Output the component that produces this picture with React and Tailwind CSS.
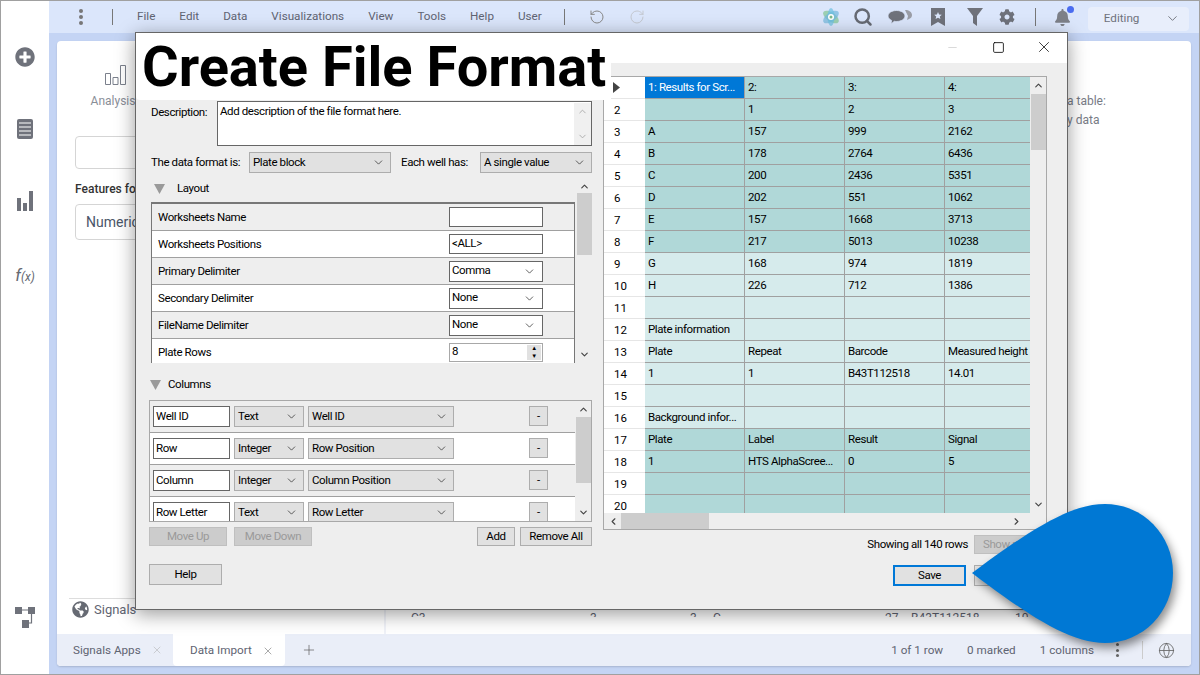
import { RotateCcw, RotateCw, Search, ChevronDown, ChevronUp, ChevronLeft, ChevronRight, X, Plus, Globe, Minus, Square } from "lucide-react";
import { FaPlusCircle, FaCog, FaBell, FaGlobeAmericas } from "react-icons/fa";

const menus = ["File", "Edit", "Data", "Visualizations", "View", "Tools", "Help", "User"];

const grid = [
  ["1: Results for Scr...", "2:", "3:", "4:"],
  ["", "1", "2", "3"],
  ["A", "157", "999", "2162"],
  ["B", "178", "2764", "6436"],
  ["C", "200", "2436", "5351"],
  ["D", "202", "551", "1062"],
  ["E", "157", "1668", "3713"],
  ["F", "217", "5013", "10238"],
  ["G", "168", "974", "1819"],
  ["H", "226", "712", "1386"],
  ["", "", "", ""],
  ["Plate information", "", "", ""],
  ["Plate", "Repeat", "Barcode", "Measured height"],
  ["1", "1", "B43T112518", "14.01"],
  ["", "", "", ""],
  ["Background infor...", "", "", ""],
  ["Plate", "Label", "Result", "Signal"],
  ["1", "HTS AlphaScree...", "0", "5"],
  ["", "", "", ""],
  ["", "", "", ""],
];

const columnRows = [
  ["Well ID", "Text", "Well ID"],
  ["Row", "Integer", "Row Position"],
  ["Column", "Integer", "Column Position"],
  ["Row Letter", "Text", "Row Letter"],
];

function DropTriangle() {
  return (
    <svg width="11" height="10" viewBox="0 0 11 10" className="shrink-0">
      <path d="M0 0h11L5.5 10z" fill="#9a9a9a" />
    </svg>
  );
}

function GraySelect({ value, className }) {
  return (
    <div className={`h-[21px] flex items-center justify-between pl-[3px] pr-[5px] bg-[#e1e1e1] border border-[#adadad] shrink-0 ${className}`}>
      <span className="pt-px">{value}</span>
      <ChevronDown size={13} strokeWidth={1.3} className="text-[#222]" />
    </div>
  );
}

function WhiteSelect({ value }) {
  return (
    <div className="w-[94px] h-[21px] flex items-center justify-between pl-[2px] pr-[6px] bg-white border border-[#666]">
      <span className="pb-[1px]">{value}</span>
      <ChevronDown size={13} strokeWidth={1.3} className="text-[#222]" />
    </div>
  );
}

function WinButton({ children, disabled, className }) {
  return (
    <div className={`flex items-center justify-center border shrink-0 pt-px ${disabled ? "bg-[#cccccc] border-[#bfbfbf] text-[#9a9a9a]" : "bg-[#e1e1e1] border-[#adadad] text-black"} ${className}`}>
      {children}
    </div>
  );
}

function LayoutRow({ label, shaded, children, cut }) {
  return (
    <div className={`flex items-center justify-between pl-[6px] pr-[31px] shrink-0 border-b border-[#a0a0a0] ${cut ? "h-[26px] border-b-0" : "h-[27px]"} ${shaded ? "bg-[#eeeeee]" : "bg-white"}`}>
      <span className="pt-px">{label}</span>
      {children}
    </div>
  );
}

function Scrollbar({ thumb, top, className }) {
  return (
    <div className={`w-[16px] flex flex-col items-center justify-between shrink-0 ${className}`}>
      <div className="w-full flex flex-col items-center">
        <ChevronUp size={11} strokeWidth={2.5} className="text-[#444] my-[3px]" />
        <div className="w-[15px] bg-[#cdcdcd]" style={{ height: thumb, marginTop: top }} />
      </div>
      <ChevronDown size={11} strokeWidth={2.5} className="text-[#444] my-[3px]" />
    </div>
  );
}

function DataGrid() {
  return (
    <div className="h-[454px] w-[444px] border border-[#a8a8a8] bg-[#eeeeee] flex flex-col">
      <div className="flex h-[436px]">
        <div className="flex-1 overflow-hidden">
          {grid.map((row, r) => {
            const dark = r < 8 || r > 15;
            return (
              <div key={r} className="flex h-[22px]">
                <div className="w-[41px] shrink-0 bg-white border-b border-[#e6e6e6] flex items-center pl-[10px] tracking-normal">
                  {r === 0 ? (
                    <svg width="7" height="11" viewBox="0 0 7 11" className="-ml-[1px]">
                      <path d="M0 0l7 5.500L0 11z" fill="#444" />
                    </svg>
                  ) : (
                    <span className="pt-[3px]">{r + 1}</span>
                  )}
                </div>
                {row.map((cell, c) => (
                  <div
                    key={c}
                    className={`h-[22px] pl-[3px] pt-px flex items-center whitespace-nowrap overflow-hidden border-b border-[#a0a0a0] ${c === 3 ? "flex-1" : "w-[100px] border-r"} ${r === 0 && c === 0 ? "bg-[#0078d7] text-white" : dark ? "bg-[#b0d8d8]" : "bg-[#d6ebec]"}`}
                  >
                    {cell}
                  </div>
                ))}
              </div>
            );
          })}
        </div>
        <Scrollbar thumb={56} top={0} />
      </div>
      <div className="flex-1 flex items-center justify-between pl-[4px] pr-[24px]">
        <div className="flex items-center">
          <ChevronLeft size={11} strokeWidth={2.5} className="text-[#444]" />
          <div className="w-[88px] h-[16px] bg-[#cdcdcd] ml-[2px]" />
        </div>
        <ChevronRight size={11} strokeWidth={2.5} className="text-[#444]" />
      </div>
    </div>
  );
}

function Dialog() {
  return (
    <div className="absolute left-[134px] top-[31px] w-[933px] h-[578px] bg-[#eeeeee] border border-[#666] shadow-[0_4px_18px_rgba(0,0,0,0.4)] [font-family:'Liberation_Sans',sans-serif] text-[11.5px] tracking-[-0.4px] text-black flex flex-col whitespace-nowrap">
      <div className="h-[30px] bg-white flex items-center justify-end shrink-0 pb-[2px]">
        <Minus size={13} strokeWidth={1} className="text-[#bbb] mr-[33px]" />
        <Square size={13} strokeWidth={1.5} className="text-black mr-[30px]" />
        <X size={18} strokeWidth={1} className="text-black mr-[14px]" />
      </div>

      {/* big caption laid over the title bar */}
      <div className="absolute left-0 top-0 w-[475px] h-[67px] bg-white rounded-bl-[4px] pl-[6px] flex items-center z-10">
        <span className="font-bold text-[56px] leading-none tracking-normal whitespace-nowrap">Create File Format</span>
      </div>

      <div className="flex-1 flex pl-[13px] pt-[13px] gap-[11px]">
        <div className="w-[443px] pt-[25px] flex flex-col">
          <div className="flex justify-between items-start h-[45px]">
            <span className="pl-[2px] pt-[3px]">Description:</span>
            <div className="w-[375px] h-[45px] bg-white border border-[#666] flex justify-between pl-[2px] pt-[1px]">
              <span>Add description of the file format here.</span>
              <div className="w-[17px] bg-[#f0f0f0] flex flex-col items-center justify-between text-[#aaa] py-[3px]">
                <ChevronUp size={11} />
                <ChevronDown size={11} />
              </div>
            </div>
          </div>

          <div className="flex items-center mt-[6px] pl-[2px]">
            <span className="w-[98px]">The data format is:</span>
            <GraySelect value="Plate block" className="w-[142px]" />
            <span className="w-[79px] ml-[10px]">Each well has:</span>
            <GraySelect value="A single value" className="w-[112px]" />
          </div>

          <div className="flex h-[185px] mt-[5px] pl-[2px]">
            <div className="flex-1 flex flex-col">
              <div className="flex items-center h-[24px] pl-[3px] gap-[12px] pb-[3px]">
                <DropTriangle />
                <span>Layout</span>
              </div>
              <div className="flex-1 border-x border-t-2 border-[#777] overflow-hidden flex flex-col">
                <LayoutRow label="Worksheets Name" shaded>
                  <div className="w-[94px] h-[20px] bg-white border border-[#666]" />
                </LayoutRow>
                <LayoutRow label="Worksheets Positions">
                  <div className="w-[94px] h-[20px] bg-white border border-[#666] pl-[2px] flex items-center">&lt;ALL&gt;</div>
                </LayoutRow>
                <LayoutRow label="Primary Delimiter" shaded>
                  <WhiteSelect value="Comma" />
                </LayoutRow>
                <LayoutRow label="Secondary Delimiter">
                  <WhiteSelect value="None" />
                </LayoutRow>
                <LayoutRow label="FileName Delimiter" shaded>
                  <WhiteSelect value="None" />
                </LayoutRow>
                <LayoutRow label="Plate Rows" cut>
                  <div className="w-[94px] h-[19px] bg-white border border-[#a8a8a8] pl-[2px] pr-[1px] flex items-center justify-between">
                    <span>8</span>
                    <div className="w-[14px] h-[15px] bg-[#e1e1e1] flex flex-col items-center justify-around text-[6px] leading-none">
                      <span>▲</span>
                      <span>▼</span>
                    </div>
                  </div>
                </LayoutRow>
              </div>
            </div>
            <Scrollbar thumb={62} top={-2} className="ml-px" />
          </div>

          <div className="flex items-center gap-[7px] h-[21px] mt-[11px] pl-[1px]">
            <DropTriangle />
            <span className="pt-px">Columns</span>
          </div>

          <div className="h-[122px] mt-[5px] border border-[#a8a8a8] flex">
            <div className="flex-1 overflow-hidden">
              {columnRows.map((row, i) => (
                <div key={row[0]} className={`h-[32px] shrink-0 flex items-start pt-[5px] pl-[3px] border-b border-[#a0a0a0] ${i % 2 === 0 ? "bg-[#eeeeee]" : "bg-white"}`}>
                  <div className="w-[77px] h-[21px] bg-white border border-[#666] pl-[2px] flex items-center shrink-0">{row[0]}</div>
                  <GraySelect value={row[1]} className="w-[70px] ml-[4px]" />
                  <GraySelect value={row[2]} className="w-[146px] ml-[4px]" />
                  <WinButton className="w-[19px] h-[20px] ml-[75px]">-</WinButton>
                </div>
              ))}
            </div>
            <Scrollbar thumb={66} top={-1} />
          </div>

          <div className="flex items-center h-[19px] mt-[5px]">
            <WinButton disabled className="w-[78px] h-[19px]">Move Up</WinButton>
            <WinButton disabled className="w-[78px] h-[19px] ml-[7px]">Move Down</WinButton>
            <WinButton className="w-[38px] h-[19px] ml-auto">Add</WinButton>
            <WinButton className="w-[72px] h-[19px] ml-[5px]">Remove All</WinButton>
          </div>

          <WinButton className="w-[73px] h-[21px] mt-[18px]">Help</WinButton>
        </div>

        <div className="w-[444px] flex flex-col">
          <DataGrid />
          <div className="flex items-center justify-end h-[19px] mt-[5px] gap-[6px]">
            <span>Showing all 140 rows</span>
            <WinButton disabled className="w-[76px] h-[19px] -mr-[3px] justify-start pl-[8px]">Show more</WinButton>
          </div>
          <div className="flex items-center justify-end mt-[11px] gap-[8px]">
            <div className="w-[73px] h-[21px] bg-[#e1e1e1] border-2 border-[#0078d7] flex items-center justify-center">Save</div>
            <WinButton className="w-[73px] h-[21px]">Cancel</WinButton>
          </div>
        </div>
      </div>
    </div>
  );
}

function Toolbar() {
  return (
    <div className="h-[32px] shrink-0 bg-[#dbe6fb] flex items-center text-[11.7px] text-[#5f6472]">
      <div className="w-[4px] h-[16px] ml-[30px] flex flex-col justify-between items-center">
        <span className="w-[4px] h-[4px] rounded-full bg-[#777]" />
        <span className="w-[4px] h-[4px] rounded-full bg-[#777]" />
        <span className="w-[4px] h-[4px] rounded-full bg-[#777]" />
      </div>
      <div className="w-px h-[16px] bg-[#777] ml-[29px]" />
      <div className="flex gap-[24px] ml-[24px]">
        {menus.map((m) => <span key={m}>{m}</span>)}
      </div>
      <div className="w-px h-[16px] bg-[#777] ml-[22px]" />
      <RotateCcw size={16} strokeWidth={1.5} className="text-[#888] ml-[24px]" />
      <RotateCw size={16} strokeWidth={1.5} className="text-[#c4c8d0] ml-[24px]" />

      <svg width="18" height="20" viewBox="0 0 18 20" className="ml-[177px]">
        <ellipse cx="9" cy="10" rx="9" ry="4.5" fill="#8cc9a0" transform="rotate(35 9 10)" opacity="0.8" />
        <ellipse cx="9" cy="10" rx="9" ry="4.5" fill="#74b6dc" transform="rotate(-35 9 10)" opacity="0.7" />
        <ellipse cx="9" cy="10" rx="3.5" ry="9" fill="#6cbfe0" opacity="0.7" />
        <circle cx="9" cy="10" r="3" fill="#fff" />
        <circle cx="9" cy="10" r="1.5" fill="#7db88a" />
      </svg>
      <Search size={20} strokeWidth={3} className="text-[#666a73] ml-[13px]" />
      <svg width="24" height="16" viewBox="0 0 24 16" className="ml-[15px]">
        <path d="M17 1c4 0 7 2 7 5 0 2-1 3-3 4l-2 1 1-4-3-6z" fill="#9a9da6" />
        <path d="M8.500 1.500c4.700 0 8.500 2.400 8.500 5.500s-3.800 5.500-8.500 5.500c-.8 0-1.500 0-2.200-.2L3 15l.6-3.600C1.400 10.400 0 8.800 0 7c0-3.100 3.800-5.500 8.500-5.500z" fill="#6f727b" stroke="#dbe6fb" strokeWidth="0.8" />
      </svg>
      <svg width="14" height="18" viewBox="0 0 14 18" className="ml-[19px]">
        <path d="M0 0h14v18l-7-4-7 4z" fill="#6f727b" />
        <path d="M7 4l1.100 2.500 2.700.2-2 1.800.6 2.600L7 9.700l-2.400 1.400.6-2.600-2-1.800 2.700-.2z" fill="#dbe6fb" />
      </svg>
      <svg width="16" height="18" viewBox="0 0 16 18" className="ml-[22px]">
        <path d="M0 0h16L10 8v10l-4-3V8z" fill="#6f727b" />
      </svg>
      <FaCog size={16} className="text-[#6f727b] ml-[16px]" />
      <div className="w-px h-[18px] bg-[#777] ml-[20px]" />
      <div className="relative ml-[18px]">
        <FaBell size={17} className="text-[#7d8088]" />
        <span className="absolute -top-[3px] -right-[3px] w-[7px] h-[7px] rounded-full bg-[#4a6cf0]" />
      </div>
      <div className="w-[101px] h-[24px] ml-[17px] mt-[3px] rounded bg-[#e8eefb] flex items-center justify-between pl-[16px] pr-[9px] text-[#6f727b]">
        <span>Editing</span>
        <ChevronDown size={15} strokeWidth={1.5} />
      </div>
    </div>
  );
}

function Sidebar() {
  return (
    <div className="w-[48px] shrink-0 bg-white flex flex-col items-center pt-[46px]">
      <FaPlusCircle size={20} className="text-[#6f727b]" />
      <svg width="16" height="20" viewBox="0 0 16 20" className="mt-[52px]">
        <rect width="16" height="20" rx="2" fill="#6f727b" />
        <path d="M2 4h12M2 8h12M2 12h12M2 16h12" stroke="#fff" strokeWidth="1.200" />
      </svg>
      <svg width="16" height="20" viewBox="0 0 16 20" className="mt-[52px]">
        <path d="M0 7h4v13H0zM6 12h4v8H6zM12 0h4v20h-4z" fill="#6f727b" />
      </svg>
      <div className="mt-[52px] [font-family:'Liberation_Serif',serif] italic text-[#666a73] flex items-baseline">
        <span className="text-[17px]">f</span>
        <span className="text-[12px]">(x)</span>
      </div>
      <svg width="20" height="21" viewBox="0 0 20 21" className="mt-auto mb-[46px]">
        <path d="M0 0h7v7H0zM13 0h7v7h-7zM7 13h7v8H7z" fill="#6f727b" />
        <path d="M7 3h6M16.500 7v9H14" stroke="#6f727b" strokeWidth="1.200" fill="none" />
      </svg>
    </div>
  );
}

function Card() {
  return (
    <div className="flex-1 mx-[8px] mt-[8px] mb-[8px] rounded bg-white flex flex-col overflow-hidden shadow-[0_1px_2px_rgba(0,0,0,0.15)]">
      <div className="flex-1 flex min-h-0">
        <div className="w-[329px] shrink-0 border-r-2 border-[#f0f2f8] flex flex-col pl-[18px] text-[#5f6472]">
          <div className="w-[76px] flex flex-col items-center pt-[24px] text-[12px] text-[#8a8e98]">
            <svg width="21" height="20" viewBox="0 0 21 20" className="ml-[4px]">
              <path d="M.5 8.500h5v11h-5zM8 12.500h5v7H8zM15.500.500h5v19h-5z" fill="none" stroke="#7b808c" />
            </svg>
            <span className="mt-[7px]">Analysis</span>
          </div>
          <div className="h-[33px] w-[290px] mt-[26px] rounded border border-[#d5d5d5]" />
          <span className="mt-[11px] text-[12px] text-[#333] font-medium">Features for</span>
          <div className="h-[36px] w-[290px] mt-[6px] rounded border border-[#d5d5d5] flex items-center pl-[10px] text-[14px] text-[#4a5568]">Numeric</div>
          <div className="mt-auto mb-[14px] -ml-[6px] border-t border-[#ddd] h-[22px] flex items-center pl-[3px] gap-[5px] text-[13px]">
            <FaGlobeAmericas size={17} className="text-[#666a73]" />
            <span>Signals</span>
          </div>
        </div>
        <div className="flex-1 flex flex-col text-[12px] text-[#777b85]">
          <div className="pl-[681px] pt-[51px] leading-[19px] whitespace-nowrap">
            <div>a table:</div>
            <div>y data</div>
          </div>
          <div className="mt-auto mb-[17px] h-[6px] overflow-hidden flex leading-[14px] text-[#5f6472] whitespace-nowrap">
            <span className="ml-[25px] w-[179px]">C3</span>
            <span className="w-[100px]">3</span>
            <span className="w-[23px]">3</span>
            <span className="w-[172px]">C</span>
            <span className="w-[26px]">27</span>
            <span className="w-[104px]">B43T112518</span>
            <span>10</span>
          </div>
        </div>
      </div>
      <div className="h-[32px] shrink-0 bg-[#eaeef8] flex items-center text-[11.7px] text-[#5f6472]">
        <div className="flex items-center w-[116px] pl-[16px] pt-px">
          <span>Signals Apps</span>
          <X size={12} strokeWidth={1} className="ml-[10px] text-[#aaa]" />
        </div>
        <div className="flex items-center w-[112px] h-full bg-white rounded-b pl-[17px] pt-px">
          <span>Data Import</span>
          <X size={12} strokeWidth={1} className="ml-[10px] text-[#555]" />
        </div>
        <Plus size={16} strokeWidth={1} className="ml-[16px] text-[#555]" />
        <span className="ml-auto pt-px">1 of 1 row</span>
        <span className="ml-[24px] pt-px">0 marked</span>
        <span className="ml-[24px] pt-px">1 columns</span>
        <div className="ml-[22px] w-[3px] h-[14px] flex flex-col justify-between">
          <span className="w-[3px] h-[3px] rounded-full bg-[#666]" />
          <span className="w-[3px] h-[3px] rounded-full bg-[#666]" />
          <span className="w-[3px] h-[3px] rounded-full bg-[#666]" />
        </div>
        <div className="w-px h-[18px] bg-[#ccc] ml-[23px]" />
        <Globe size={17} strokeWidth={1.2} className="ml-[15px] mr-[16px] text-[#666]" />
      </div>
    </div>
  );
}

export default function App() {
  return (
    <div className="relative w-[1200px] h-[675px] overflow-hidden border border-[#a0a0a0] flex bg-white [font-family:Roboto,sans-serif]">
      <Sidebar />
      <div className="flex-1 flex flex-col bg-[#c4d4f4] min-w-0">
        <Toolbar />
        <Card />
      </div>
      <Dialog />
      {/* callout drop over the dialog corner */}
      <svg width="1200" height="675" className="absolute -left-px -top-px pointer-events-none drop-shadow-[3px_5px_5px_rgba(0,0,0,0.45)]">
        <path d="M972 573C1030 530 1070 504 1105 504C1143 504 1173 535 1173 573C1173 612 1143 643 1105 643C1070 643 1030 617 972 573Z" fill="#0078d4" />
      </svg>
    </div>
  );
}
